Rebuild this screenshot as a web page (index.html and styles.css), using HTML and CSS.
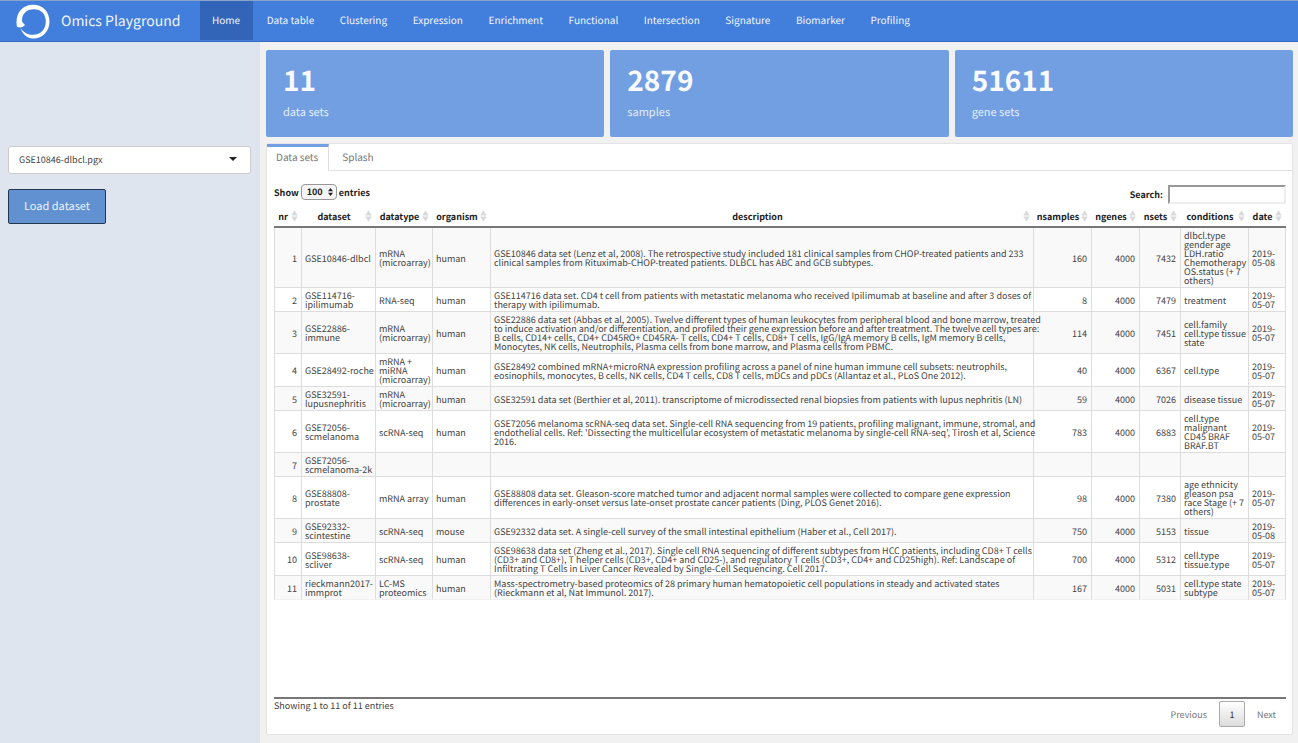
FILE: index.html
```html
<!DOCTYPE html>
<html lang="en">
<head>
<meta charset="utf-8">
<title>Omics Playground</title>
<link rel="stylesheet" href="styles.css">
</head>
<body>
<svg class="sprite" aria-hidden="true">
  <symbol id="sort" viewBox="0 0 7 12"><path d="M3.5 0.3 6.8 5.5H0.2ZM0.2 6.500H6.800L3.5 11.700Z"/></symbol>
</svg>
<header class="navbar">
  <svg class="logo" viewBox="0 0 36 36" aria-hidden="true"><path d="M2 24C-.5 11 7 1.700 18 1.700 28 1.700 34.500 9 34.500 18.500C34.500 28 28 35.500 18 35.500 12 35.500 7.500 31 5.500 25 9 30 13 31.800 18 31.800 26 31.800 30.800 26 30.800 18.500 30.800 11 26 6.200 19 6.200 10.500 6.200 6.200 12 7.200 19L10 22Q8 25.500 2 24Z"/></svg>
  <span class="brand">Omics Playground</span>
  <nav class="menu">
    <a class="menu-item active" href="#">Home</a>
    <a class="menu-item" href="#">Data table</a>
    <a class="menu-item" href="#">Clustering</a>
    <a class="menu-item" href="#">Expression</a>
    <a class="menu-item" href="#">Enrichment</a>
    <a class="menu-item" href="#">Functional</a>
    <a class="menu-item" href="#">Intersection</a>
    <a class="menu-item" href="#">Signature</a>
    <a class="menu-item" href="#">Biomarker</a>
    <a class="menu-item" href="#">Profiling</a>
  </nav>
</header>
<div class="page">
  <aside class="sidebar">
    <div class="picker">
      <select class="picker-select" aria-label="Dataset"><option>GSE10846-dlbcl.pgx</option></select>
      <svg class="picker-arrow" viewBox="0 0 8 4" aria-hidden="true"><path d="M0 0H8L4 4Z"/></svg>
    </div>
    <button class="load" type="button">Load dataset</button>
  </aside>
  <main class="main">
    <section class="boxes">
      <div class="box"><div class="box-value">11</div><div class="box-label">data sets</div></div>
      <div class="box"><div class="box-value">2879</div><div class="box-label">samples</div></div>
      <div class="box"><div class="box-value">51611</div><div class="box-label">gene sets</div></div>
    </section>
    <section class="panel">
      <div class="tabs"><a class="tab current" href="#">Data sets</a><a class="tab" href="#">Splash</a></div>
      <div class="content">
        <div class="tools">
          <label class="length">Show
            <span class="length-box">
              <select class="length-select"><option>100</option></select>
              <svg class="length-arrow" viewBox="0 0 5 8" aria-hidden="true"><path d="M2.500 0 5 3.200H0ZM0 4.800H5L2.500 8Z"/></svg>
            </span>
            entries</label>
          <label class="search">Search: <input class="search-input" type="search"></label>
        </div>
        <div class="scroll">
          <table class="data">
            <colgroup><col class="c-nr"><col class="c-set"><col class="c-type"><col class="c-org"><col><col class="c-samples"><col class="c-genes"><col class="c-sets"><col class="c-cond"><col class="c-date"></colgroup>
            <thead><tr>
              <th><div class="head"><span>nr</span><svg><use href="#sort"/></svg></div></th>
              <th><div class="head"><span>dataset</span><svg><use href="#sort"/></svg></div></th>
              <th><div class="head"><span>datatype</span><svg><use href="#sort"/></svg></div></th>
              <th><div class="head"><span>organism</span><svg><use href="#sort"/></svg></div></th>
              <th><div class="head"><span>description</span><svg><use href="#sort"/></svg></div></th>
              <th><div class="head"><span>nsamples</span><svg><use href="#sort"/></svg></div></th>
              <th><div class="head"><span>ngenes</span><svg><use href="#sort"/></svg></div></th>
              <th><div class="head"><span>nsets</span><svg><use href="#sort"/></svg></div></th>
              <th><div class="head"><span>conditions</span><svg><use href="#sort"/></svg></div></th>
              <th><div class="head"><span>date</span><svg><use href="#sort"/></svg></div></th>
            </tr></thead>
            <tbody>
              <tr><td class="num">1</td><td>GSE10846-dlbcl</td><td>mRNA (microarray)</td><td>human</td><td class="desc">GSE10846 data set (Lenz et al, 2008). The retrospective study included 181 clinical samples from CHOP-treated patients and 233<br>clinical samples from Rituximab-CHOP-treated patients. DLBCL has ABC and GCB subtypes.</td><td class="num">160</td><td class="num">4000</td><td class="num">7432</td><td>dlbcl.type gender age LDH.ratio Chemotherapy OS.status (+ 7 others)</td><td>2019-05-08</td></tr>
              <tr><td class="num">2</td><td>GSE114716-ipilimumab</td><td>RNA-seq</td><td>human</td><td class="desc">GSE114716 data set. CD4 t cell from patients with metastatic melanoma who received Ipilimumab at baseline and after 3 doses of<br>therapy with ipilimumab.</td><td class="num">8</td><td class="num">4000</td><td class="num">7479</td><td>treatment</td><td>2019-05-07</td></tr>
              <tr><td class="num">3</td><td>GSE22886-immune</td><td>mRNA (microarray)</td><td>human</td><td class="desc">GSE22886 data set (Abbas et al, 2005). Twelve different types of human leukocytes from peripheral blood and bone marrow, treated<br>to induce activation and/or differentiation, and profiled their gene expression before and after treatment. The twelve cell types are:<br>B cells, CD14+ cells, CD4+ CD45RO+ CD45RA- T cells, CD4+ T cells, CD8+ T cells, IgG/IgA memory B cells, IgM memory B cells,<br>Monocytes, NK cells, Neutrophils, Plasma cells from bone marrow, and Plasma cells from PBMC.</td><td class="num">114</td><td class="num">4000</td><td class="num">7451</td><td>cell.family cell.type tissue state</td><td>2019-05-07</td></tr>
              <tr><td class="num">4</td><td>GSE28492-roche</td><td>mRNA + miRNA (microarray)</td><td>human</td><td class="desc">GSE28492 combined mRNA+microRNA expression profiling across a panel of nine human immune cell subsets: neutrophils,<br>eosinophils, monocytes, B cells, NK cells, CD4 T cells, CD8 T cells, mDCs and pDCs (Allantaz et al., PLoS One 2012).</td><td class="num">40</td><td class="num">4000</td><td class="num">6367</td><td>cell.type</td><td>2019-05-07</td></tr>
              <tr><td class="num">5</td><td>GSE32591-lupusnephritis</td><td>mRNA (microarray)</td><td>human</td><td class="desc">GSE32591 data set (Berthier et al, 2011). transcriptome of microdissected renal biopsies from patients with lupus nephritis (LN)</td><td class="num">59</td><td class="num">4000</td><td class="num">7026</td><td>disease tissue</td><td>2019-05-07</td></tr>
              <tr><td class="num">6</td><td>GSE72056-scmelanoma</td><td>scRNA-seq</td><td>human</td><td class="desc">GSE72056 melanoma scRNA-seq data set. Single-cell RNA sequencing from 19 patients, profiling malignant, immune, stromal, and<br>endothelial cells. Ref: 'Dissecting the multicellular ecosystem of metastatic melanoma by single-cell RNA-seq', Tirosh et al, Science<br>2016.</td><td class="num">783</td><td class="num">4000</td><td class="num">6883</td><td>cell.type malignant CD45 BRAF BRAF.BT</td><td>2019-05-07</td></tr>
              <tr><td class="num">7</td><td>GSE72056-scmelanoma-2k</td><td></td><td></td><td></td><td></td><td></td><td></td><td></td><td></td></tr>
              <tr><td class="num">8</td><td>GSE88808-prostate</td><td>mRNA array</td><td>human</td><td class="desc">GSE88808 data set. Gleason-score matched tumor and adjacent normal samples were collected to compare gene expression<br>differences in early-onset versus late-onset prostate cancer patients (Ding, PLOS Genet 2016).</td><td class="num">98</td><td class="num">4000</td><td class="num">7380</td><td>age ethnicity gleason psa race Stage (+ 7 others)</td><td>2019-05-07</td></tr>
              <tr><td class="num">9</td><td>GSE92332-scintestine</td><td>scRNA-seq</td><td>mouse</td><td class="desc">GSE92332 data set. A single-cell survey of the small intestinal epithelium (Haber et al., Cell 2017).</td><td class="num">750</td><td class="num">4000</td><td class="num">5153</td><td>tissue</td><td>2019-05-08</td></tr>
              <tr><td class="num">10</td><td>GSE98638-scliver</td><td>scRNA-seq</td><td>human</td><td class="desc">GSE98638 data set (Zheng et al., 2017). Single cell RNA sequencing of different subtypes from HCC patients, including CD8+ T cells<br>(CD3+ and CD8+), T helper cells (CD3+, CD4+ and CD25-), and regulatory T cells (CD3+, CD4+ and CD25high). Ref: Landscape of<br>Infiltrating T Cells in Liver Cancer Revealed by Single-Cell Sequencing. Cell 2017.</td><td class="num">700</td><td class="num">4000</td><td class="num">5312</td><td>cell.type tissue.type</td><td>2019-05-07</td></tr>
              <tr><td class="num">11</td><td>rieckmann2017-immprot</td><td>LC-MS proteomics</td><td>human</td><td class="desc">Mass-spectrometry-based proteomics of 28 primary human hematopoietic cell populations in steady and activated states<br>(Rieckmann et al, Nat Immunol. 2017).</td><td class="num">167</td><td class="num">4000</td><td class="num">5031</td><td>cell.type state subtype</td><td>2019-05-07</td></tr>
            </tbody>
          </table>
        </div>
        <div class="foot">
          <div class="info">Showing 1 to 11 of 11 entries</div>
          <div class="pager">
            <button class="page-btn" type="button">Previous</button>
            <button class="page-btn on" type="button">1</button>
            <button class="page-btn" type="button">Next</button>
          </div>
        </div>
      </div>
    </section>
  </main>
</div>
</body>
</html>
```
FILE: styles.css
```css
* { box-sizing: border-box; }
body {
  margin: 0;
  min-height: 100vh;
  display: flex;
  flex-direction: column;
  background: #f1f1f1;
  color: #444;
  font-family: "Noto Sans CJK SC", "Noto Sans", sans-serif;
  font-size: 9px;
  line-height: 9px;
  text-rendering: geometricPrecision;
}
button, select, input { font: inherit; color: inherit; margin: 0; text-rendering: inherit; }
select { line-height: 14px; }
a { text-decoration: none; }
.sprite { display: none; }

.navbar {
  display: flex;
  height: 42px;
  padding-left: 15px;
  background: #427fdd;
  border-top: 1px solid #8ba3c9;
  border-bottom: 1px solid #376bc2;
  color: #f1f5fc;
}
.logo { width: 36px; height: 36px; margin-top: 2px; fill: #fff; }
.brand { width: 138px; padding-left: 10px; font-size: 14px; line-height: 40px; white-space: nowrap; }
.menu { display: flex; justify-content: space-between; width: 722px; margin-left: 11px; }
.menu-item { padding: 0 12px; color: #f1f5fc; font-size: 10px; line-height: 38px; height: 39px; }
.menu-item.active { padding-right: 13px; background: #3265b8; }

.page { flex: 1; display: flex; }
.sidebar { width: 260px; flex: none; padding: 104px 9px 0 8px; background: #dfe5ef; }
.picker { position: relative; }
.picker-select {
  display: block;
  width: 100%;
  height: 28px;
  padding: 0 10px;
  appearance: none;
  background: #fff;
  border: 1px solid #ccc;
  border-radius: 3px;
}
.picker-arrow { position: absolute; right: 14px; top: 11px; width: 8px; height: 4px; fill: #222; }
.load {
  display: block;
  margin-top: 15px;
  height: 35px;
  padding: 0 15px;
  background: #6191d0;
  border: 1px solid #24364f;
  border-radius: 2px;
  color: #eef3fa;
  font-size: 11px;
}

.main { flex: 1; min-width: 0; display: flex; flex-direction: column; padding: 8px 5px 8px 6px; gap: 6px; }
.boxes { display: grid; grid-template-columns: repeat(3, 1fr); gap: 6px; }
.box { height: 87px; padding: 13px 17px; background: #729fe2; border-radius: 2px; color: #f8fafd; }
.box-value { font-size: 28px; line-height: 34px; font-weight: 700; }
.box-label { margin-top: 7px; font-size: 11px; line-height: 16px; color: #e6eefa; }

.panel { flex: 1; display: flex; flex-direction: column; background: #fff; border: 1px solid #e4e4e4; border-radius: 2px; }
.tabs { display: flex; height: 27px; border-bottom: 1px solid #e2e2e2; }
.tab { height: 26px; padding: 0 13px; color: #777; font-size: 10px; line-height: 26px; }
.tab.current {
  padding: 0 10px 0 9px;
  background: #fff;
  border-top: 3px solid #729fe2;
  border-right: 1px solid #ddd;
  line-height: 20px;
  height: 27px;
}
.content { flex: 1; display: flex; flex-direction: column; padding: 13px 6px 7px 7px; }
.tools { display: flex; justify-content: space-between; align-items: flex-start; height: 22px; color: #222; font-weight: 700; }
.length, .search { display: flex; align-items: center; }
.length { gap: 2px; height: 16px; }
.length-box { position: relative; }
.length-select {
  display: block;
  width: 36px;
  height: 16px;
  padding: 0 5px;
  appearance: none;
  background: #f5f5f5;
  border: 1px solid #999;
  border-radius: 4px;
}
.length-arrow { position: absolute; right: 4px; top: 4px; width: 5px; height: 8px; fill: #222; }
.search { gap: 5px; height: 20px; }
.search-input { width: 118px; height: 19px; background: #fff; border: 2px solid; border-color: #999 #eee #eee #999; }

.scroll { flex: 1; border-bottom: 2px solid #777; }
.data { width: 100%; table-layout: fixed; border-collapse: separate; border-spacing: 0; }
.c-nr { width: 28px; }
.c-set { width: 74px; }
.c-type { width: 57px; }
.c-org { width: 58px; }
.c-samples, .c-genes, .c-sets, .c-cond, .c-date { width: 41px; }
.c-samples { width: 58px; }
.c-genes { width: 48px; }
.c-cond { width: 68px; }
.c-date { width: 37px; }
.data th { height: 22px; padding: 0 4px 0 1px; border-bottom: 2px solid #777; color: #222; font-weight: 700; }
.head { display: flex; align-items: center; }
.head span { flex: 1; text-align: center; }
.head svg { flex: none; width: 7px; height: 12px; fill: #d9dadb; }
.data td { padding: 3px 1px 2px 3px; border-right: 1px solid #ddd; border-bottom: 1px solid #ddd; vertical-align: middle; }
.data td:first-child { border-left: 1px solid #ddd; }
.data tbody tr:nth-child(odd) { background: #f9f9f9; }
.data tbody tr:last-child td { border-bottom-color: #f1f1f1; }
.data td.num { padding-right: 4px; text-align: right; }
.data td.desc { white-space: nowrap; }

.foot { display: flex; justify-content: space-between; height: 28px; }
.info { padding-top: 2px; }
.pager { display: flex; padding-top: 2px; gap: 2px; }
.page-btn { height: 26px; padding: 0 9px; border: 1px solid transparent; border-radius: 2px; background: none; color: #777; }
.page-btn.on { width: 26px; color: #333; border-color: #aaa; background: linear-gradient(#fff, #dcdcdc); }
```
